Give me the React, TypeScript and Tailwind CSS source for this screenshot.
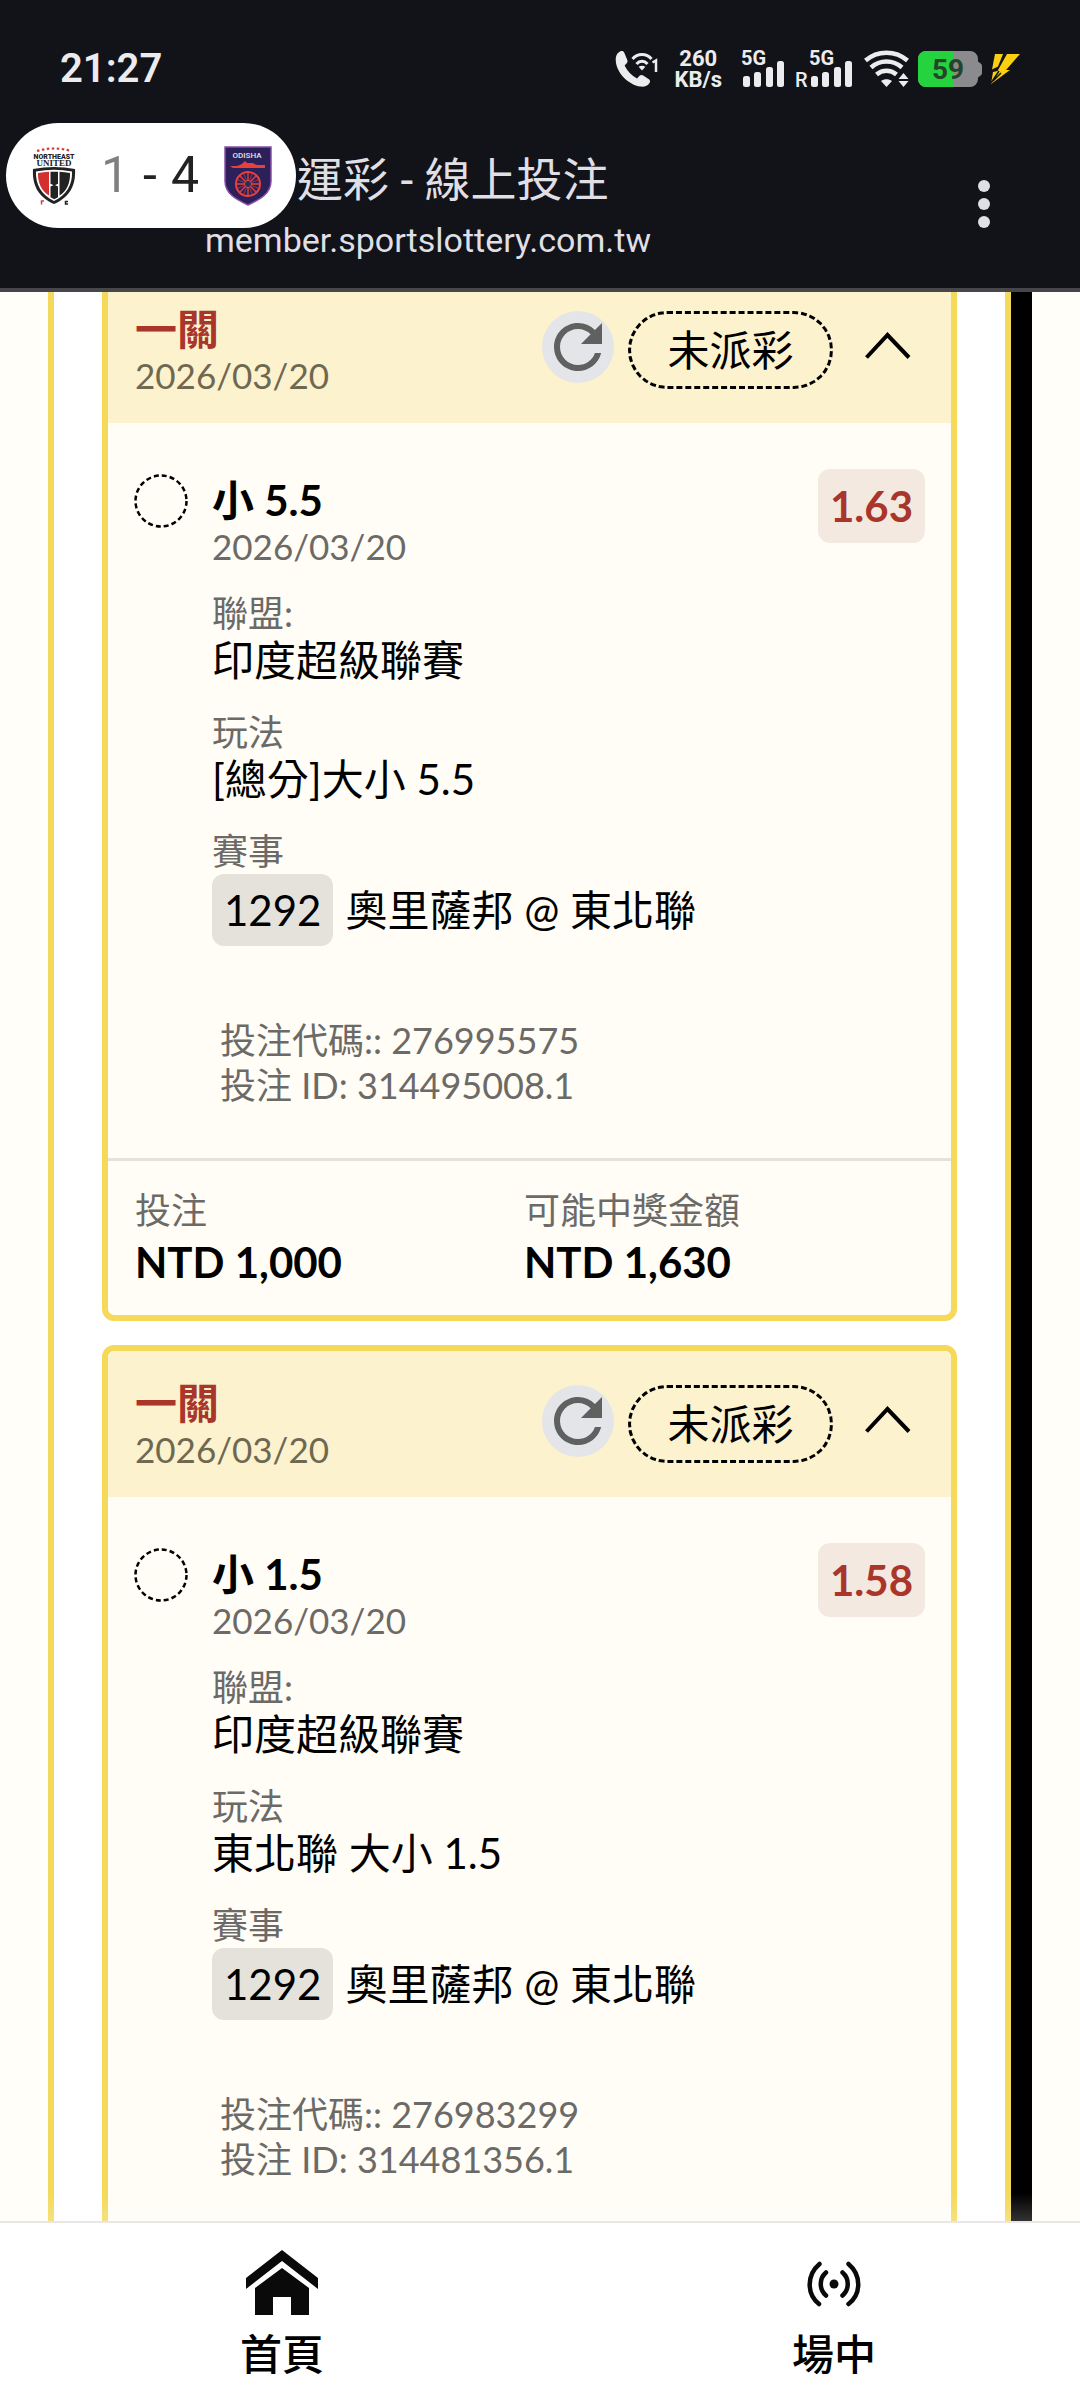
import type { ReactNode } from "react";
import { MdRefresh } from "react-icons/md";

type Bet = {
  pick: string;
  odds: string;
  market: string;
  code: string;
  id: string;
  stake?: string;
  payout?: string;
};

const bets: Bet[] = [
  {
    pick: "小 5.5",
    odds: "1.63",
    market: "[總分]大小 5.5",
    code: "276995575",
    id: "314495008.1",
    stake: "NTD 1,000",
    payout: "NTD 1,630",
  },
  {
    pick: "小 1.5",
    odds: "1.58",
    market: "東北聯 大小 1.5",
    code: "276983299",
    id: "314481356.1",
  },
];

function CallIcon() {
  return (
    <svg width="44" height="38" viewBox="0 0 44 38" fill="none" aria-hidden="true">
      <path
        d="M5 1.500C2 3 .5 6 .8 11c.7 12 13 24 24.500 25.600 4 .5 7.200-.4 9.200-3.600.9-1.500.7-2.800-.6-3.800l-5.700-3.600c-1.300-.8-2.800-.7-3.900.4l-2.300 2.400C16.500 25.600 12.300 21 9.600 15.600l2.100-2.300c.9-1 1.100-2.200.5-3.500L9.300 2.700C8.500 1 6.800.6 5 1.500Z"
        fill="#ececee"
      />
      <path d="M17.500 9c5-6 14-6 19 0M21.500 14c3.200-3.600 7.800-3.600 11 0" stroke="#ececee" strokeWidth="3" />
      <path d="m27 20.500-3.400-3.700c2-1.500 4.800-1.500 6.800 0Z" fill="#ececee" />
      <path d="M37.500 12.500 41 10.500V22" stroke="#ececee" strokeWidth="2.500" />
    </svg>
  );
}

function Signal({ roaming }: { roaming?: boolean }) {
  return (
    <svg width="62" height="50" viewBox="0 -6 62 50" fill="#ececee" aria-hidden="true">
      <text x="17" y="15" fontSize="20" fontWeight="700" fontFamily="Roboto, sans-serif">5G</text>
      {roaming && (
        <text x="3" y="37" fontSize="20" fontWeight="500" fontFamily="Roboto, sans-serif">R</text>
      )}
      <rect x="19" y="26" width="7" height="11" rx="2.500" />
      <rect x="30" y="22" width="7" height="15" rx="2.500" />
      <rect x="42" y="17" width="7" height="20" rx="2.500" />
      <rect x="53" y="11" width="7" height="26" rx="2.500" />
    </svg>
  );
}

function WifiIcon() {
  return (
    <svg width="46" height="38" viewBox="0 0 46 38" aria-hidden="true">
      <g fill="none" stroke="#ececee" strokeWidth="4.500">
        <path d="M1.500 10.500c12-10.500 30-10.500 42 0" />
        <path d="M7 17.500c9-8 22-8 31 0" />
        <path d="M12.500 24.500c6-5 14-5 20 0" />
      </g>
      <path d="m22.500 37-5.500-6c3.300-2.500 7.700-2.500 11 0ZM39.500 23l5 6h-10ZM39.500 37l5-6h-10Z" fill="#ececee" />
    </svg>
  );
}

function Battery() {
  return (
    <svg width="64" height="38" viewBox="0 0 64 38" role="img" aria-label="59%">
      <path d="M8 1h44a8 8 0 0 1 8 8v2.500l2 1.500q2 1 2 3v7q0 2-2 3l-2 1.500V29a8 8 0 0 1-8 8H8a8 8 0 0 1-8-8V9a8 8 0 0 1 8-8Z" fill="#8b8b8d" />
      <path d="M35 1H8a8 8 0 0 0-8 8v20a8 8 0 0 0 8 8h27Z" fill="#25d33e" />
      <text x="30" y="29" textAnchor="middle" fontSize="28" fontWeight="700" fontFamily="Roboto, sans-serif" fill="#23452a">59</text>
    </svg>
  );
}

function BoltIcon() {
  return (
    <svg width="30" height="32" viewBox="0 0 30 32" fill="#fdd00f" aria-hidden="true">
      <path d="M5 1h8L8 13.500 2 16.500Z" />
      <path d="M17 1h13L16 17h4L1 31l2-12 4.500-1Z" />
      <path d="M1 30 9 18M11 20 3 28" stroke="#121319" strokeWidth="1.500" />
    </svg>
  );
}

function NorthEastCrest() {
  return (
    <svg width="44" height="58" viewBox="0 0 44 58" role="img" aria-label="NorthEast United">
      <path d="M5 4q17-5 34 0" fill="none" stroke="#d2383a" strokeWidth="2.200" strokeDasharray="2.500 2.500" />
      <text x="22" y="12" textAnchor="middle" fontSize="7" fontWeight="900" fontFamily="Roboto, sans-serif" fill="#222">NORTHEAST</text>
      <text x="22" y="19" textAnchor="middle" fontSize="9" fontWeight="900" fontFamily="Liberation Serif, serif" fill="#222">UNITED</text>
      <path d="M1 22q21-4 42 0c1 16-5 28-21 35C6 50 0 38 1 22Z" fill="#222" />
      <path d="M4 24.500q18-3.500 36 0c.5 13-5 23-18 29.500C9 47.500 3.500 37.500 4 24.500Z" fill="#fff" />
      <path d="M6 26q5.500-1 11-1.300V48.500C9.500 44 5.700 36 6 26Z" fill="#d2302f" />
      <path d="M18.500 24.700h7.500v12l-3.700 1.800-3.800-1.800ZM18.500 39.500l3.800-1.700 3.700 1.700v10.700l-3.700 2-3.800-2ZM27.500 24.700Q33 25 38 26c.3 10-3 18-10.500 22.500Z" fill="#222" />
      <path d="M9.500 57.500V54h2.500" fill="none" stroke="#c44" strokeWidth="1.500" />
      <path d="M36 54.500h-2.500v2.500H36" fill="none" stroke="#222" strokeWidth="1.500" />
    </svg>
  );
}

function OdishaCrest() {
  return (
    <svg width="48" height="60" viewBox="0 0 48 60" role="img" aria-label="Odisha">
      <path d="M1 1h46v34c0 12-10 18-23 24C11 53 1 47 1 35Z" fill="#2b2059" stroke="#8a4fa6" strokeWidth="1.500" />
      <text x="23" y="12" textAnchor="middle" fontSize="8" fontWeight="500" fontFamily="Roboto, sans-serif" fill="#e4e0ee">ODISHA</text>
      <path d="M6 20h7q4-1 6-3l2-2 2 2h6q2 2 6 2h6v3H9Z" fill="#e8413c" />
      <g stroke="#e8413c" fill="none">
        <circle cx="24" cy="38" r="12" strokeWidth="2" />
        <path d="M24 26v24M12 38h24M15.500 29.500l17 17M32.500 29.500l-17 17" strokeWidth="1.300" />
        <path d="M19.400 27 28.600 49M28.600 27 19.400 49M13 33.400 35 42.600M35 33.400 13 42.600" strokeWidth=".6" />
      </g>
      <circle cx="24" cy="38" r="3.500" fill="#23305e" stroke="#e8413c" />
    </svg>
  );
}

function Header() {
  return (
    <header className="relative z-10 shrink-0 border-b-4 border-[#47474b] bg-[#121319] font-['Roboto','Noto_Sans_CJK_TC',sans-serif] text-[#dfdfe5]">
      <div className="flex h-[138px] items-center pr-[60px] pl-[60px]">
        <time className="text-[40px] font-semibold text-[#ececee]">21:27</time>
        <div className="ml-auto flex items-center">
          <CallIcon />
          <div className="mr-0.5 ml-4 text-center text-[22px] leading-[21px] font-bold text-[#ececee]">
            <div>260</div>
            <div>KB/s</div>
          </div>
          <Signal />
          <span className="w-1.5" />
          <Signal roaming />
          <span className="w-2.5" />
          <WifiIcon />
          <span className="w-2" />
          <Battery />
          <span className="w-2" />
          <BoltIcon />
        </div>
      </div>
      <div className="flex items-center pb-[18px] pl-[205px]">
        <div className="min-w-0 flex-1 pt-3">
          <h1 className="pl-[92px] text-[46px] leading-[60px]">運彩 - 線上投注</h1>
          <p className="text-[34px] leading-[60px]">member.sportslottery.com.tw</p>
        </div>
        <button type="button" aria-label="更多選項" className="mr-[78px] flex flex-col gap-[6px] p-3">
          <span className="size-3 rounded-full bg-[#dfdfe5]" />
          <span className="size-3 rounded-full bg-[#dfdfe5]" />
          <span className="size-3 rounded-full bg-[#dfdfe5]" />
        </button>
      </div>
      <div className="absolute top-[123px] left-[6px] flex h-[105px] w-[290px] items-center justify-between rounded-full bg-white pr-6 pl-[26px] text-[50px]">
        <NorthEastCrest />
        <span className="flex gap-3.5">
          <span className="text-[#808080]">1</span>
          <span className="text-[#222]">-</span>
          <span className="text-[#222]">4</span>
        </span>
        <OdishaCrest />
      </div>
    </header>
  );
}

function Field({ label, children }: { label: string; children: ReactNode }) {
  return (
    <div>
      <dt className="text-[36px] leading-[46px] text-[#6b6a67]">{label}</dt>
      <dd className="text-[42px] leading-[49px]">{children}</dd>
    </div>
  );
}

function BetCard({ bet }: { bet: Bet }) {
  return (
    <article className="overflow-hidden rounded-xl border-[6px] border-[#f4d95b] bg-[#fffdf6]">
      <div className="flex h-[146px] items-start bg-[#fcf2ce] pt-[29px] pr-10 pl-[27px]">
        <div className="flex-1">
          <h2 className="text-[42px] leading-[46px] font-bold text-[#a8362a]">一關</h2>
          <p className="text-[35px] leading-[46px] text-[#6f6851]">2026/03/20</p>
        </div>
        <div className="flex items-start pt-[5px]">
          <button type="button" aria-label="重新整理" className="size-[72px] rounded-full bg-[#e4e5e8] text-[#5f6060]">
            <MdRefresh className="size-[72px]" />
          </button>
          <span className="ml-3.5 flex h-[78px] w-[205px] items-center justify-center rounded-full border-3 border-dashed border-black text-[42px]">
            未派彩
          </span>
          <button type="button" aria-label="收合" className="ml-8 pt-[21px]">
            <svg width="46" height="27" viewBox="0 0 46 27" fill="none">
              <path d="M1.500 25.500 22.500 3l21.500 22.500" stroke="#000" strokeWidth="4" />
            </svg>
          </button>
        </div>
      </div>

      <div className="flex items-start pt-[46px] pr-[26px] pb-[50px] pl-[26px]">
        <svg width="54" height="54" viewBox="0 0 54 54" fill="none" className="mt-[5px] shrink-0" aria-hidden="true">
          <circle cx="27" cy="27" r="25.500" stroke="#000" strokeWidth="2.500" strokeDasharray="5 3.010" />
        </svg>
        <div className="ml-6 flex-1 pt-2">
          <h3 className="text-[42px] leading-[46px] font-bold">{bet.pick}</h3>
          <p className="text-[35px] leading-[46px] text-[#6b6a67]">2026/03/20</p>
          <dl className="mt-[21px] flex flex-col gap-6">
            <Field label="聯盟:">印度超級聯賽</Field>
            <Field label="玩法">{bet.market}</Field>
            <Field label="賽事">
              <span className="flex items-center gap-3">
                <span className="flex h-[72px] items-center rounded-xl bg-[#e5e2dc] px-3">1292</span>
                奧里薩邦 @ 東北聯
              </span>
            </Field>
          </dl>
          <div className="mt-[72px] pl-2 text-[36px] leading-[45px] text-[#6b6a67]">
            <p>投注代碼:: {bet.code}</p>
            <p>投注 ID: {bet.id}</p>
          </div>
        </div>
        <span className="flex h-[74px] items-center rounded-xl bg-[#f4e9e1] px-3 text-[42px] font-bold text-[#a8362a]">
          {bet.odds}
        </span>
      </div>

      {bet.stake && (
        <dl className="grid grid-cols-2 border-t-3 border-[#e5e2dc] pt-[26px] pr-[38px] pb-6 pl-[27px]">
          <div>
            <dt className="text-[36px] leading-[46px] text-[#6b6a67]">投注</dt>
            <dd className="text-[42px] leading-[58px] font-bold">{bet.stake}</dd>
          </div>
          <div>
            <dt className="text-[36px] leading-[46px] text-[#6b6a67]">可能中獎金額</dt>
            <dd className="text-[42px] leading-[58px] font-bold">{bet.payout}</dd>
          </div>
        </dl>
      )}
    </article>
  );
}

function BottomNav() {
  return (
    <nav className="grid shrink-0 grid-cols-[564fr_492fr] gap-6 border-t-2 border-[#e8e7e5] bg-white pt-[27px] pb-4 text-[42px] leading-[60px] font-medium">
      <a href="#home" className="flex flex-col items-center gap-2">
        <svg width="72" height="66" viewBox="0 0 72 66" fill="#0a0a0a" aria-hidden="true">
          <path d="M36 0 72 28v11L36 11 0 39V28Z" />
          <path d="M36 18 63 38v27H45V47H27v18H9V38Z" />
        </svg>
        首頁
      </a>
      <a href="#live" className="flex flex-col items-center gap-2">
        <svg width="56" height="66" viewBox="0 0 56 66" fill="none" stroke="#0a0a0a" strokeWidth="4.500" strokeLinecap="round" aria-hidden="true">
          <path d="M13.500 14C.5 25 .5 44 13 54M42.500 14C55.500 25 55.500 44 42.500 54" />
          <path d="M20 22.500c-7 6-7 17 0 23M36.500 22.500c7 6 7 17 0 23" />
          <circle cx="28" cy="34" r="4.500" fill="#0a0a0a" stroke="none" />
        </svg>
        場中
      </a>
    </nav>
  );
}

export default function App() {
  return (
    <div className="flex h-screen flex-col overflow-hidden bg-[#fffef8] font-['Lato','Noto_Sans_CJK_TC',sans-serif] text-black">
      <Header />
      <main className="relative min-h-0 flex-1 overflow-hidden pr-12 pl-12">
        <div className="-mt-[21px] border-r-[21px] border-black">
          <div className="flex flex-col gap-6 border-x-[6px] border-[#f4d95b] bg-white px-12">
            {bets.map((bet) => (
              <BetCard key={bet.id} bet={bet} />
            ))}
          </div>
        </div>
        <div className="pointer-events-none absolute inset-x-0 bottom-0 h-7 bg-linear-to-t from-white/20 to-transparent" />
      </main>
      <BottomNav />
    </div>
  );
}
